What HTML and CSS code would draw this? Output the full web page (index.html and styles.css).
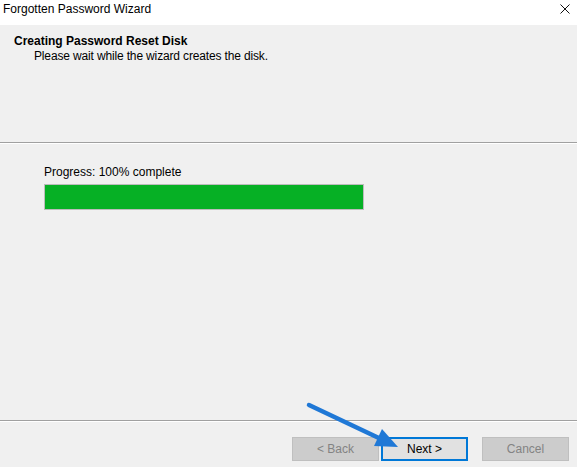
FILE: index.html
```html
<!DOCTYPE html>
<html lang="en">

<head>
  <meta charset="UTF-8">
  <meta name="viewport" content="width=device-width, initial-scale=1.0">
  <title>Forgotten Password Wizard</title>
  <link rel="stylesheet" href="styles.css">
</head>

<body>
  <div id="wizard">
    <div class="titlebar">
      <span class="title">Forgotten Password Wizard</span>
      <svg class="close" width="10" height="10" viewBox="0 0 10 10">
        <path d="M0.5 0.5 L9.5 9.5 M9.5 0.5 L0.5 9.5" stroke="#111" stroke-width="1" fill="none" />
      </svg>
    </div>

    <div class="header">
      <h1>Creating Password Reset Disk</h1>
      <p>Please wait while the wizard creates the disk.</p>
    </div>

    <div class="content">
      <p class="label">Progress: 100% complete</p>
      <div class="progress">
        <div class="bar" style="width: 100%"></div>
      </div>
    </div>

    <div class="footer">
      <button type="button" class="btn" disabled>&lt; Back</button>
      <button type="button" class="btn btn-next">Next &gt;</button>
      <button type="button" class="btn btn-cancel" disabled>Cancel</button>
    </div>

    <!-- pointer arrow drawn over the dialog -->
    <svg class="pointer" width="577" height="467" viewBox="0 0 577 467">
      <line x1="309" y1="405" x2="382" y2="439.5" stroke="#1f78d6" stroke-width="4.5" stroke-linecap="round" />
      <polygon points="398,447 374,446 382,429" fill="#1f78d6" />
    </svg>
  </div>
</body>

</html>
```

FILE: styles.css
```css
* {
  box-sizing: border-box;
}

body {
  margin: 0;
  background-color: #f0f0f0;
  font-family: "Liberation Sans", Arial, sans-serif;
  font-size: 12px;
  color: #000;
}

#wizard {
  position: relative;
  width: 577px;
  height: 467px;
  display: flex;
  flex-direction: column;
  background-color: #f0f0f0;
}

/* title bar */
.titlebar {
  height: 25px;
  background-color: #fff;
  display: flex;
  justify-content: space-between;
  align-items: flex-start;
  padding: 2px 7px 0 3px;
}

.titlebar .title {
  line-height: 15px;
}

.titlebar .close {
  margin-top: 2px;
}

/* header */
.header {
  height: 118px;
  padding: 9px 0 0 14px;
  border-bottom: 1px solid #a0a0a0;
}

.header h1 {
  margin: 0;
  font-size: 12px;
  font-weight: bold;
  line-height: 15px;
}

.header p {
  margin: 0;
  padding-left: 20px;
  line-height: 15px;
  letter-spacing: -0.15px;
}

/* progress */
.content {
  flex: 1;
  border-top: 1px solid #fff;
  padding: 21px 0 0 44px;
}

.content .label {
  margin: 0 0 4px 0;
  line-height: 15px;
}

.progress {
  width: 320px;
  height: 26px;
  border: 1px solid #bcbcbc;
  background-color: #e6e6e6;
}

.progress .bar {
  height: 100%;
  background-color: #06b025;
}

/* buttons */
.footer {
  height: 47px;
  border-top: 1px solid #a0a0a0;
  box-shadow: inset 0 1px 0 #fff;
  display: flex;
  justify-content: flex-end;
  align-items: flex-start;
  padding: 16px 8px 0 0;
}

.btn {
  width: 87px;
  height: 24px;
  font-family: "Liberation Sans", Arial, sans-serif;
  font-size: 12px;
  border: 1px solid #adadad;
  background-color: #e1e1e1;
  color: #000;
  padding: 0;
}

.btn:disabled {
  background-color: #cccccc;
  border-color: #bfbfbf;
  color: #838383;
}

.btn-next {
  margin-left: 2px;
  border: 1px solid #0078d7;
  box-shadow: inset 0 0 0 1px #0078d7;
}

.btn-cancel {
  margin-left: 14px;
}

.pointer {
  position: absolute;
  left: 0;
  top: 0;
  pointer-events: none;
}
```
